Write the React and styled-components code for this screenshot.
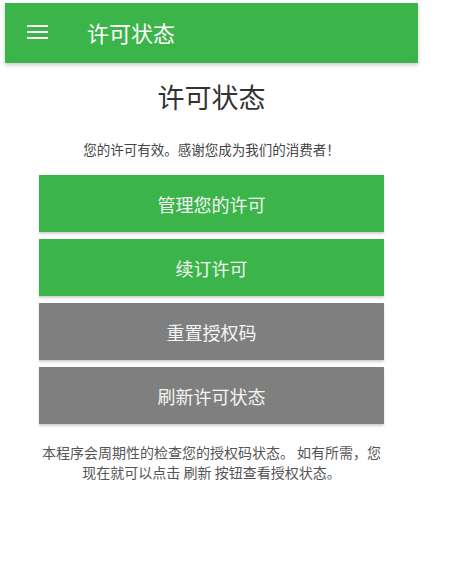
import React from 'react'
import styled, { createGlobalStyle } from 'styled-components'

const GlobalStyle = createGlobalStyle`
  html, body {
    margin: 0;
    padding: 0;
    background: #ffffff;
  }
  body {
    font-family: "Noto Sans CJK SC", "Noto Sans", Roboto, sans-serif;
  }
`

const Screen = styled.div`
  width: 413px;
  margin: 3px 0 0 5px;
  display: flex;
  flex-direction: column;
`

const Toolbar = styled.header`
  height: 60px;
  background: #3bb44a;
  display: flex;
  align-items: center;
  box-shadow: 0 2px 4px rgba(0, 0, 0, 0.22);
`

const MenuButton = styled.button`
  width: 21px;
  height: 14px;
  margin: -2px 0 0 22px;
  padding: 0;
  border: none;
  background: transparent;
  display: flex;
  flex-direction: column;
  justify-content: space-between;
  cursor: pointer;

  span {
    display: block;
    height: 2px;
    background: #ffffff;
  }
`

const ToolbarTitle = styled.h1`
  margin: -3px 0 0 39px;
  color: #ffffff;
  font-size: 22px;
  font-weight: 400;
  line-height: 1;
`

const Content = styled.main`
  display: flex;
  flex-direction: column;
  align-items: center;
  padding: 0 34px;
`

const Heading = styled.h2`
  margin: 17px 0 0;
  font-size: 27px;
  font-weight: 400;
  line-height: 34px;
  color: #333333;
`

const Status = styled.p`
  margin: 25px 0 0;
  font-size: 13.5px;
  line-height: 20px;
  color: #444444;
`

const Actions = styled.div`
  width: 100%;
  margin-top: 16px;
  display: flex;
  flex-direction: column;
  gap: 7px;
`

const ActionButton = styled.button`
  height: 57px;
  width: 100%;
  border: none;
  border-radius: 0;
  background: ${p => (p.$variant === 'grey' ? '#7f7f7f' : '#3bb44a')};
  color: #f4f4f4;
  font-family: inherit;
  font-size: 18px;
  font-weight: 400;
  box-shadow: 0 2px 2px rgba(0, 0, 0, 0.18);
  cursor: pointer;
`

const Note = styled.p`
  margin: 18px 0 0;
  width: 100%;
  text-align: center;
  font-size: 14px;
  line-height: 20px;
  color: #555555;
`

const actions = [
  { label: '管理您的许可', variant: 'green' },
  { label: '续订许可', variant: 'green' },
  { label: '重置授权码', variant: 'grey' },
  { label: '刷新许可状态', variant: 'grey' },
]

const App = () => {
  return (
    <>
      <GlobalStyle />
      <Screen>
        <Toolbar>
          <MenuButton aria-label="menu">
            <span />
            <span />
            <span />
          </MenuButton>
          <ToolbarTitle>许可状态</ToolbarTitle>
        </Toolbar>
        <Content>
          <Heading>许可状态</Heading>
          <Status>您的许可有效。感谢您成为我们的消费者！</Status>
          <Actions>
            {actions.map(a => (
              <ActionButton key={a.label} $variant={a.variant}>
                {a.label}
              </ActionButton>
            ))}
          </Actions>
          <Note>
            本程序会周期性的检查您的授权码状态。 如有所需，您现在就可以点击 刷新 按钮查看授权状态。
          </Note>
        </Content>
      </Screen>
    </>
  )
}

export default App
